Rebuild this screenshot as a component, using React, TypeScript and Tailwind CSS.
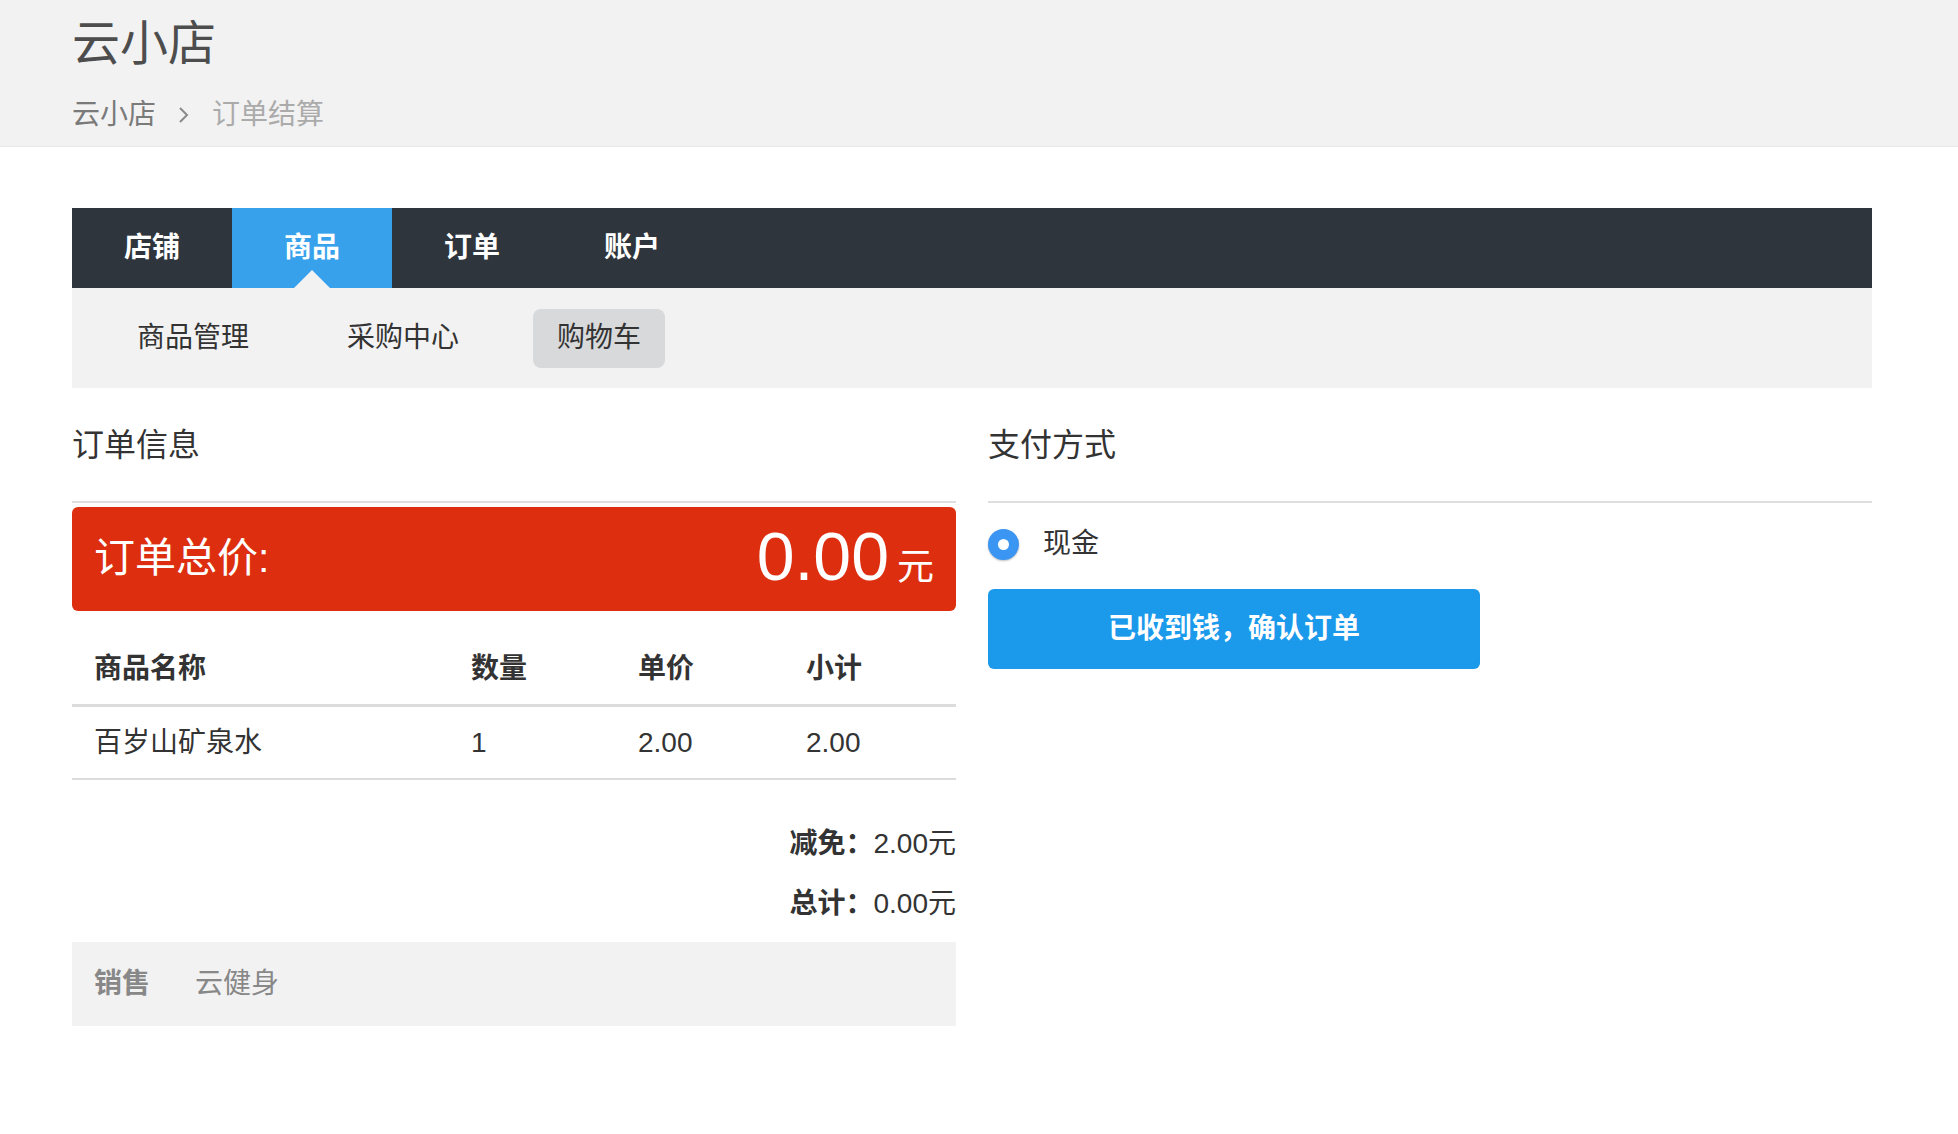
import React from "react";

const navTabs = ["店铺", "商品", "订单", "账户"];
const subTabs = ["商品管理", "采购中心", "购物车"];

const items = [{ name: "百岁山矿泉水", qty: "1", price: "2.00", subtotal: "2.00" }];

const App = () => {
  return (
    <div className="min-h-[1134px] bg-white font-['Liberation_Sans','Noto_Sans_CJK_SC',sans-serif] text-[#333]">
      {/* header */}
      <header className="h-[147px] bg-[#f2f2f2] border-b border-[#e8e8e8] px-[72px] pt-[12px]">
        <h1 className="text-[48px] leading-[64px] text-[#4d4d4d]">云小店</h1>
        <div className="mt-[20px] flex items-center text-[28px] leading-[38px]">
          <span className="text-[#7a7a7a]">云小店</span>
          <svg width="14" height="22" viewBox="0 0 14 22" className="mx-[21px]" fill="none">
            <path d="M3 4 L10 11 L3 18" stroke="#8a8a8a" strokeWidth="2" />
          </svg>
          <span className="text-[#ababab]">订单结算</span>
        </div>
      </header>

      <main className="ml-[72px] w-[1800px] pt-[61px]">
        {/* top nav */}
        <nav className="flex h-[80px] bg-[#2e353d]">
          {navTabs.map((tab) => (
            <div
              key={tab}
              className={
                tab === "商品"
                  ? "relative flex w-[160px] items-center justify-center bg-[#37a1ec] text-[28px] font-bold text-white"
                  : "flex w-[160px] items-center justify-center text-[28px] font-bold text-white"
              }
            >
              {tab}
              {tab === "商品" && (
                <span className="absolute bottom-0 left-1/2 -ml-[18px] h-0 w-0 border-x-[18px] border-b-[18px] border-x-transparent border-b-[#f2f2f2]" />
              )}
            </div>
          ))}
        </nav>
        <div className="flex h-[100px] items-center gap-[50px] bg-[#f2f2f2] pl-[41px]">
          {subTabs.map((tab) => (
            <div
              key={tab}
              className={
                tab === "购物车"
                  ? "flex h-[59px] items-center rounded-lg bg-[#d8d9db] px-6 text-[28px] text-[#333]"
                  : "flex h-[59px] items-center px-6 text-[28px] text-[#333]"
              }
            >
              {tab}
            </div>
          ))}
        </div>

        <div className="grid grid-cols-2 gap-[32px]">
          {/* order info */}
          <section>
            <h2 className="flex h-[115px] items-center border-b-2 border-[#dedede] text-[32px] text-[#333]">订单信息</h2>
            <div className="mt-[4px] flex h-[104px] items-center justify-between rounded-md bg-[#dd2e10] px-[22px] text-white">
              <span className="text-[41px]">订单总价:</span>
              <span className="flex items-baseline">
                <span className="text-[68px] leading-none">0.00</span>
                <span className="ml-[8px] text-[37px]">元</span>
              </span>
            </div>

            <div className="mt-[22px]">
              <div className="grid h-[74px] grid-cols-[378px_167px_168px_1fr] items-center border-b-[3px] border-[#dcdcdc] text-[28px] font-bold">
                <div className="pl-[22px]">商品名称</div>
                <div className="pl-[21px]">数量</div>
                <div className="pl-[21px]">单价</div>
                <div className="pl-[21px]">小计</div>
              </div>
              {items.map((item) => (
                <div
                  key={item.name}
                  className="grid h-[73px] grid-cols-[378px_167px_168px_1fr] items-center border-b-2 border-[#dcdcdc] text-[28px]"
                >
                  <div className="pl-[22px]">{item.name}</div>
                  <div className="pl-[21px]">{item.qty}</div>
                  <div className="pl-[21px]">{item.price}</div>
                  <div className="pl-[21px]">{item.subtotal}</div>
                </div>
              ))}
            </div>

            <div className="mt-[34px] text-right text-[28px] leading-[60px]">
              <div>
                <span className="font-bold">减免：</span>2.00元
              </div>
              <div>
                <span className="font-bold">总计：</span>0.00元
              </div>
            </div>

            <div className="mt-[8px] flex h-[84px] items-center gap-[45px] bg-[#f2f2f2] px-[22px] text-[28px] text-[#888]">
              <span className="font-bold">销售</span>
              <span>云健身</span>
            </div>
          </section>

          {/* payment */}
          <section>
            <h2 className="flex h-[115px] items-center border-b-2 border-[#dedede] text-[32px] text-[#333]">支付方式</h2>
            <label className="mt-[8px] flex h-[66px] items-center">
              <span className="flex h-[31px] w-[31px] items-center justify-center rounded-full bg-[#3b95f2] shadow-[0_1px_2px_rgba(0,0,0,0.25)]">
                <span className="h-[11px] w-[11px] rounded-full bg-white" />
              </span>
              <span className="ml-[24px] text-[28px] text-[#333]">现金</span>
            </label>
            <button className="mt-[12px] flex h-[80px] w-[492px] items-center justify-center rounded-md bg-[#1b99eb] text-[28px] font-bold text-white">
              已收到钱，确认订单
            </button>
          </section>
        </div>
      </main>
    </div>
  );
};

export default App;
